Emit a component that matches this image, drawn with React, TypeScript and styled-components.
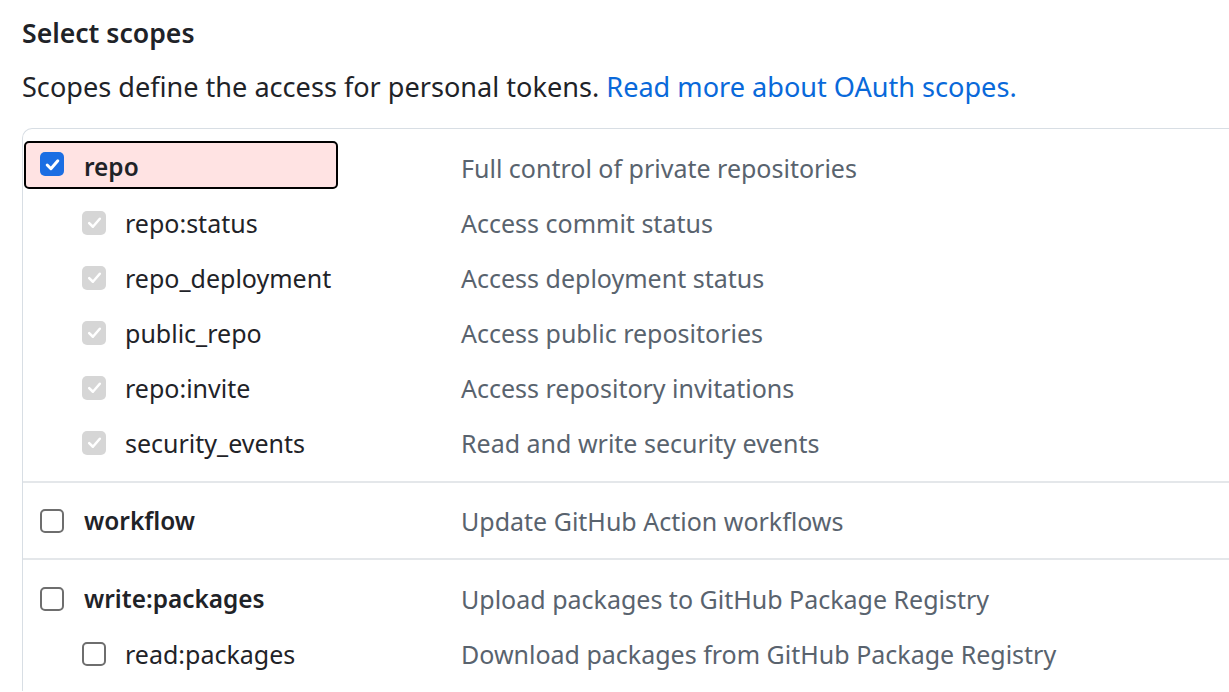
import React from "react";
import styled, { createGlobalStyle } from "styled-components";

const Global = createGlobalStyle`
  html, body { margin: 0; padding: 0; background: #ffffff; overflow: hidden; }
  body { font-family: "Noto Sans", "Open Sans", sans-serif; color: #1f2328; }
`;

const Page = styled.div`
  padding: 14px 0 0 22px;
  width: 1260px;
`;

const Title = styled.h3`
  margin: 0;
  font-size: 26.6px;
  font-weight: 600;
  line-height: 38px;
  color: #1f2328;
`;

const Note = styled.p`
  margin: 16px 0 0;
  font-size: 27.1px;
  line-height: 38px;
  color: #1f2328;
`;

const Link = styled.a`
  color: #0969da;
  text-decoration: none;
`;

const Table = styled.div`
  margin-top: 22px;
  border: 1px solid #d8dee4;
  border-right: none;
  border-bottom: none;
  border-top-left-radius: 10px;
`;

const Group = styled.div<{ $last?: boolean }>`
  padding: ${(p) => (p.$last ? "11px" : "10px")} 0 10px;
  border-bottom: ${(p) => (p.$last ? "none" : "2px solid #e4e7ea")};
  &:first-child {
    padding-top: 11px;
    padding-bottom: 11px;
  }
`;

const Row = styled.div`
  display: grid;
  grid-template-columns: 438px 1fr;
  align-items: center;
  height: 55px;
`;

const Scope = styled.label<{ $sub?: boolean; $focus?: boolean }>`
  display: flex;
  align-items: center;
  align-self: ${(p) => (p.$focus ? "start" : "center")};
  gap: ${(p) => (p.$sub ? "19px" : "20px")};
  box-sizing: border-box;
  height: 48px;
  width: ${(p) => (p.$focus ? "314px" : "auto")};
  margin: ${(p) => (p.$focus ? "1px" : "0")} 0 0 1px;
  padding: ${(p) => (p.$focus ? "2px" : "0")} 0 0 ${(p) => (p.$sub ? "56px" : "14px")};
  border: 2px solid ${(p) => (p.$focus ? "#000" : "transparent")};
  border-radius: 5px;
  background: ${(p) => (p.$focus ? "#ffe3e3" : "transparent")};
  font-size: ${(p) => (p.$sub ? "25px" : "24.4px")};
  font-weight: ${(p) => (p.$sub ? 400 : 600)};
  color: #1f2328;
`;

const Box = styled.span<{ $state: "on" | "off" | "disabled"; $lift?: boolean }>`
  flex: none;
  display: inline-flex;
  align-items: center;
  justify-content: center;
  box-sizing: border-box;
  width: 24px;
  height: 24px;
  margin-top: ${(p) => (p.$lift ? "-4px" : "0")};
  border-radius: 5px;
  background: ${(p) =>
    p.$state === "on" ? "#1b6ee3" : p.$state === "disabled" ? "#d6d6d6" : "#ffffff"};
  border: ${(p) => (p.$state === "off" ? "2px solid #6e6e6e" : "none")};
`;

const Desc = styled.span`
  font-size: 25px;
  color: #59636e;
`;

type State = "on" | "off" | "disabled";

const Check: React.FC<{ state: State; lift?: boolean }> = ({ state, lift }) => (
  <Box $state={state} $lift={lift}>
    {state !== "off" && (
      <svg width="17" height="17" viewBox="0 0 16 16">
        <path
          d="M3 8.5 L6.5 12 L13 4.5"
          fill="none"
          stroke="#ffffff"
          strokeWidth={state === "on" ? 2.8 : 2.4}
          strokeLinecap="round"
          strokeLinejoin="round"
        />
      </svg>
    )}
  </Box>
);

type Item = { name: string; desc: string; state: State; sub?: boolean; focus?: boolean };

const groups: Item[][] = [
  [
    { name: "repo", desc: "Full control of private repositories", state: "on", focus: true },
    { name: "repo:status", desc: "Access commit status", state: "disabled", sub: true },
    { name: "repo_deployment", desc: "Access deployment status", state: "disabled", sub: true },
    { name: "public_repo", desc: "Access public repositories", state: "disabled", sub: true },
    { name: "repo:invite", desc: "Access repository invitations", state: "disabled", sub: true },
    { name: "security_events", desc: "Read and write security events", state: "disabled", sub: true },
  ],
  [{ name: "workflow", desc: "Update GitHub Action workflows", state: "off" }],
  [
    { name: "write:packages", desc: "Upload packages to GitHub Package Registry", state: "off" },
    { name: "read:packages", desc: "Download packages from GitHub Package Registry", state: "off", sub: true },
  ],
];

export default function App() {
  return (
    <>
      <Global />
      <Page>
        <Title>Select scopes</Title>
        <Note>
          Scopes define the access for personal tokens.{" "}
          <Link href="#">Read more about OAuth scopes.</Link>
        </Note>
        <Table>
          {groups.map((g, gi) => (
            <Group key={gi} $last={gi === groups.length - 1}>
              {g.map((it) => (
                <Row key={it.name}>
                  <Scope $sub={it.sub} $focus={it.focus}>
                    <Check state={it.state} lift={it.focus} />
                    {it.name}
                  </Scope>
                  <Desc>{it.desc}</Desc>
                </Row>
              ))}
            </Group>
          ))}
        </Table>
      </Page>
    </>
  );
}
